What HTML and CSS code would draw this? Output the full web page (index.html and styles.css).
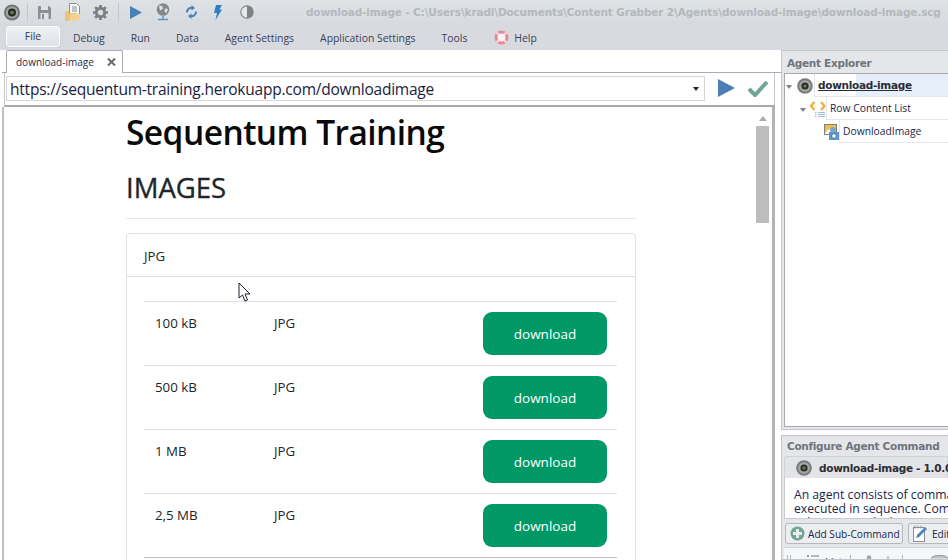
FILE: index.html
```html
<!DOCTYPE html>
<html lang="en">
<head>
<meta charset="utf-8">
<title>download-image</title>
<link rel="stylesheet" href="styles.css">
</head>
<body>
<div class="app">
  <header class="titlebar">
    <svg class="logo" width="24" height="24" viewBox="0 0 24 24"><circle cx="12" cy="12.500" r="8" fill="#737575"/><circle cx="12" cy="12.500" r="6" fill="#a5a7a7"/><circle cx="12" cy="12.500" r="4" fill="#2a2c2a"/><circle cx="12" cy="12.500" r="1.800" fill="#5c8a3a"/></svg>
    <span class="qsep s1"></span>
    <svg class="q-save" width="13" height="13" viewBox="0 0 13 13"><path d="M0 0h11l2 2v11H0z" fill="#8b9095"/><rect x="3" y="0" width="7" height="4" fill="#dfe2e5"/><rect x="2.500" y="7" width="8" height="6" fill="#dfe2e5"/><rect x="4" y="8" width="2" height="5" fill="#8b9095"/></svg>
    <svg class="q-open" width="16" height="19" viewBox="0 0 16 19"><path d="M4.500 .5h7l3 3v8h-10z" fill="#f6f7f8" stroke="#8b9095"/><path d="M7 4h5M7 6h5M7 8h5" stroke="#8b9095"/><path d="M0 8h4v2h8l-2 8H0z" fill="#efc27c"/><path d="M4 18l2-7h10l-3 7z" fill="#f5d193"/></svg>
    <svg class="q-gear" width="15" height="15" viewBox="0 0 16 16"><circle cx="8" cy="8" r="4.500" fill="none" stroke="#7c7f80" stroke-width="3"/><path d="M8 0v3M8 13v3M0 8h3M13 8h3M2.300 2.300l2 2M11.700 11.700l2 2M13.700 2.300l-2 2M4.300 11.700l-2 2" stroke="#7c7f80" stroke-width="2.800"/></svg>
    <span class="qsep s2"></span>
    <svg class="q-play" width="12" height="13" viewBox="0 0 12 13"><path d="M0 0l12 6.500L0 13z" fill="#4a7fb8"/></svg>
    <svg class="q-globe" width="14" height="18" viewBox="0 0 14 18"><circle cx="7" cy="6.500" r="6.300" fill="#85898c"/><path d="M3 2.500l3 .5 1 2.500-3 2zM9 5.500l3 .5-1.500 4-2-1.500z" fill="#dfe2e5"/><path d="M2 16.500h10M7 13v3.500" stroke="#5f93c6" stroke-width="1.500"/></svg>
    <svg class="q-sync" width="11" height="14" viewBox="0 0 11 14"><path d="M1 7.500a4.500 4.500 0 0 1 6-4.500M10 6.500a4.500 4.500 0 0 1-6 4.500" fill="none" stroke="#3f84bf" stroke-width="2"/><path d="M5.500 0l3.500 3-3.500 2.500zM5.500 14L2 11l3.500-2.500z" fill="#3f84bf"/></svg>
    <svg class="q-bolt" width="8" height="15" viewBox="0 0 8 15"><path d="M2 0h6L5.500 4.500H8L1.500 15l1.500-7H0z" fill="#2e7fc4"/></svg>
    <svg class="q-half" width="14" height="14" viewBox="0 0 14 14"><circle cx="7" cy="7" r="6.200" fill="#e6e8ea" stroke="#85898c" stroke-width="1.200"/><path d="M7 .8a6.200 6.200 0 0 1 0 12.400z" fill="#7f8386"/></svg>
    <div class="doc-title">download-image - C:\Users\kradi\Documents\Content Grabber 2\Agents\download-image\download-image.scg</div>
  </header>
  <nav class="menubar">
    <span class="menu-file">File</span>
    <span class="menu-item">Debug</span>
    <span class="menu-item">Run</span>
    <span class="menu-item">Data</span>
    <span class="menu-item">Agent Settings</span>
    <span class="menu-item">Application Settings</span>
    <span class="menu-item">Tools</span>
    <svg class="help-icon" width="15" height="15" viewBox="0 0 15 15"><circle cx="7.500" cy="7.500" r="5.500" fill="#f2f3f5" stroke="#e58a97" stroke-width="3"/><path d="M2.500 2.500l2.500 2.500M12.500 2.500L10 5M2.500 12.500L5 10M12.500 12.500L10 10" stroke="#f7dde1" stroke-width="1.800"/></svg>
    <span class="menu-item">Help</span>
  </nav>
  <div class="workspace">
    <main class="browser-pane">
      <div class="tabstrip">
        <div class="tab"><span>download-image</span>
          <svg class="tab-close" width="9" height="8" viewBox="0 0 9 8"><path d="M1 .5l7 7M8 .5l-7 7" stroke="#666a70" stroke-width="2"/></svg>
        </div>
      </div>
      <div class="urlrow">
        <div class="urlbox">
          <span class="urltext">https://sequentum-training.herokuapp.com/downloadimage</span>
          <span class="caret"></span>
        </div>
        <svg class="go" width="18" height="18" viewBox="0 0 18 18"><path d="M0 0l17 9-17 9z" fill="#4a7fb8"/></svg>
        <svg class="ok" width="22" height="17" viewBox="0 0 22 17"><path d="M2 9l6 6L20 2" fill="none" stroke="#6fa593" stroke-width="4"/></svg>
      </div>
      <div class="webview">
        <div class="page">
          <h1>Sequentum Training</h1>
          <h2>IMAGES</h2>
          <div class="card">
            <div class="card-head">JPG</div>
            <div class="card-body">
              <div class="row"><span class="c1">100 kB</span><span class="c2">JPG</span><span class="btn">download</span></div>
              <div class="row"><span class="c1">500 kB</span><span class="c2">JPG</span><span class="btn">download</span></div>
              <div class="row"><span class="c1">1 MB</span><span class="c2">JPG</span><span class="btn">download</span></div>
              <div class="row"><span class="c1">2,5 MB</span><span class="c2">JPG</span><span class="btn">download</span></div>
              <div class="row last"></div>
            </div>
          </div>
        </div>
        <div class="scrollbar"><span class="arrow"></span><span class="thumb"></span></div>
        <svg class="cursor" width="14" height="21" viewBox="0 0 14 21"><path d="M1 1v15l3.500-3 2.500 6 2.500-1-2.500-6h5z" fill="#fff" stroke="#1a2030"/></svg>
      </div>
    </main>
    <aside class="side">
      <section class="explorer">
        <div class="panel-title">Agent Explorer</div>
        <div class="tree">
          <div class="node n0">
            <span class="twist"></span>
            <svg class="node-ico" width="16" height="16" viewBox="0 0 16 16"><circle cx="8" cy="8" r="7.800" fill="#7a7c7c"/><circle cx="8" cy="8" r="5.800" fill="#a5a7a7"/><circle cx="8" cy="8" r="3.600" fill="#2c2e2c"/><circle cx="8" cy="8" r="1.600" fill="#5c8a3a"/></svg>
            <span class="label strong">download-image</span>
          </div>
          <div class="node n1">
            <span class="twist"></span>
            <svg class="node-ico" width="16" height="16" viewBox="0 0 16 16"><path d="M4.500 1L1 5l3.500 4M11 1l3.500 4L11 9" fill="none" stroke="#eeb040" stroke-width="2.400"/><path d="M5 11.500h1.500M8 11.500h7M5 13.500h1.500M8 13.500h7M5 15.500h1.500M8 15.500h7" stroke="#9dbbd8"/></svg>
            <span class="label">Row Content List</span>
          </div>
          <div class="node n2">
            <svg class="node-ico" width="15" height="16" viewBox="0 0 15 16"><rect x=".5" y=".5" width="12" height="10" fill="#f0c04a" stroke="#7b8085"/><path d="M1 9l4-4 3 3v2H1z" fill="#fff"/><circle cx="9" cy="6" r="3" fill="#7da6cc"/><rect x="5" y="8" width="10" height="8" fill="#5f97c9"/><circle cx="10" cy="12" r="2.500" fill="#e1ebf4" stroke="#3f78ad"/></svg>
            <span class="label">DownloadImage</span>
          </div>
        </div>
      </section>
      <section class="config">
        <div class="panel-title">Configure Agent Command</div>
        <div class="cmd-head">
          <svg class="node-ico" width="16" height="16" viewBox="0 0 16 16"><circle cx="8" cy="8" r="7.800" fill="#7a7c7c"/><circle cx="8" cy="8" r="5.800" fill="#a5a7a7"/><circle cx="8" cy="8" r="3.600" fill="#2c2e2c"/><circle cx="8" cy="8" r="1.600" fill="#5c8a3a"/></svg>
          <span>download-image - 1.0.0</span>
        </div>
        <div class="cmd-desc">An agent consists of commands that are<br>executed in sequence. Commands can have<br>sub-commands that are executed in order</div>
        <div class="cmd-btns">
          <span class="cmd-btn"><svg class="node-ico" width="15" height="15" viewBox="0 0 15 15"><circle cx="7.500" cy="7.500" r="7" fill="#6fa593"/><path d="M7.500 3v9M3 7.500h9" stroke="#e6f0ec" stroke-width="3"/></svg><span>Add Sub-Command</span></span>
          <span class="cmd-btn"><svg class="node-ico" width="16" height="17" viewBox="0 0 16 17"><rect x=".5" y="2.500" width="11" height="14" fill="#fff" stroke="#8b9095"/><path d="M2 .5v3M5 .5v3M8 .5v3" stroke="#8b9095"/><path d="M3 13l1-3 8-8 2 2-8 8z" fill="#4a86c0"/></svg><span>Edit</span></span>
        </div>
        <div class="cmd-tabs">
          <span class="grip"></span>
          <svg class="list-ico" width="12" height="10" viewBox="0 0 12 10"><path d="M0 1h2M0 5h2M0 9h2" stroke="#3f84bf" stroke-width="1.500"/><path d="M4 1h8M4 5h8M4 9h8" stroke="#777b80"/></svg>
          <span class="tab-list">List</span>
          <span class="tab-sep"></span>
          <svg class="person" width="8" height="10" viewBox="0 0 8 10"><circle cx="4" cy="2.500" r="2.300" fill="#a3a6aa"/><path d="M0 10l1-4h6l1 4z" fill="#a3a6aa"/></svg>
          <svg class="person2" width="8" height="10" viewBox="0 0 8 10"><path d="M4 0l4 10H0z" fill="#b7c6d6"/></svg>
          <span class="tab-sep s3"></span>
          <svg class="db" width="17" height="12" viewBox="0 0 17 12"><ellipse cx="8.500" cy="3" rx="8" ry="2.500" fill="#c2c4c7" stroke="#8d9094"/><path d="M.5 3v9h16V3" fill="#d8dadc"/></svg>
        </div>
      </section>
    </aside>
  </div>
</div>
</body>
</html>
```
FILE: styles.css
```css
* { box-sizing: border-box; }
html, body { margin: 0; padding: 0; }
body { width: 948px; height: 560px; overflow: hidden; font-family: "Open Sans", "Noto Sans", sans-serif; color: #2b3040; background: #d9dbe0; }
.app { width: 948px; height: 560px; display: flex; flex-direction: column; }
svg { flex: none; display: block; }

.titlebar { height: 24px; display: flex; align-items: center; background: linear-gradient(#dfe2e5, #d7dade); flex: none; }
.qsep { width: 1px; height: 18px; background: #c3c6ca; flex: none; }
.s1 { margin: 0 10px 0 3px; }
.q-open { margin-left: 14px; }
.q-gear { margin-left: 12px; }
.s2 { margin: 0 11px 0 10px; }
.q-globe { margin-left: 14px; }
.q-sync { margin-left: 16px; }
.q-bolt { margin-left: 17px; }
.q-half { margin-left: 18px; }
.doc-title { font: bold 10.500px "DejaVu Sans", sans-serif; letter-spacing: -0.150px; color: #b4b8bd; white-space: nowrap; margin-left: 52px; }

.menubar { height: 26px; display: flex; align-items: center; background: #d8dadf; flex: none; font: 10.400px/14px "Open Sans", sans-serif; padding: 1px 0 0 6px; }
.menu-file { width: 54px; height: 21px; margin-top: -2px; line-height: 19px; text-align: center; background: linear-gradient(#eef0f3, #dfe2e7); border: 1px solid #fff; border-radius: 3px; box-shadow: 0 0 1px #a8acb3; margin-right: 13px; color: #333a4c; }
.menu-item { color: #3b4255; white-space: nowrap; margin-right: 26px; }
.help-icon { margin: 0 5px 0 1px; }

.workspace { flex: 1; display: flex; min-height: 0; }
.browser-pane { width: 781px; display: flex; flex-direction: column; background: #fff; padding-left: 2px; flex: none; }
.tabstrip { height: 23px; flex: none; border-bottom: 1px solid #a9acb3; background: #fff; }
.tab { width: 117px; height: 23px; margin-left: 4px; padding: 0 6px 0 9px; display: flex; align-items: center; justify-content: space-between; background: #fff; border: 1px solid #a9acb3; border-bottom: 0; border-radius: 2px 2px 0 0; font-size: 10px; color: #1f2a50; }

.urlrow { height: 34px; flex: none; display: flex; align-items: flex-start; margin: 0 6px 0 2px; padding: 3px 0 0 1px; border-left: 1px solid #c6c8cc; border-right: 1px solid #c6c8cc; border-bottom: 2px solid #a9a9ab; }
.urlbox { width: 699px; height: 25px; flex: none; display: flex; align-items: center; justify-content: space-between; border: 1px solid #d5d5d5; padding: 0 5px 0 3px; font: 15.500px "Open Sans", sans-serif; color: #1a2240; }
.urltext { letter-spacing: -0.220px; }
.caret { width: 0; height: 0; border: 3.500px solid transparent; border-top: 4px solid #222; border-bottom: 0; }
.go { margin: 3px 0 0 13px; }
.ok { margin: 4px 0 0 11px; }

.webview { position: relative; flex: 1; min-height: 0; overflow: hidden; background: #fff; border-left: 2px solid #bfc0c5; border-right: 3px solid #b4b4b6; margin-right: 6px; }
.page { width: 510px; margin-left: 122px; color: #212529; font-family: "Open Sans", sans-serif; }
h1 { margin: 0; height: 51px; font-size: 33.500px; line-height: 51px; font-weight: 600; color: #0a0a0a; letter-spacing: -0.550px; }
h2 { margin: 0; height: 61px; padding-top: 12px; font-size: 27.500px; line-height: 36px; font-weight: 400; -webkit-text-stroke: 0.350px #212529; color: #212529; border-bottom: 1px solid #e4e6e8; }
.card { margin-top: 14px; border: 1px solid #dcdfe1; border-radius: 4px; height: 400px; }
.card-head { height: 43px; padding: 13px 0 0 17px; border-bottom: 1px solid #dcdfe1; font-size: 13.300px; line-height: 18px; }
.card-body { padding: 24px 18px 0 17px; }
.row { height: 64px; border-top: 1px solid #dee2e6; display: flex; padding: 10px 10px 0 11px; font-size: 13.300px; line-height: 22px; }
.row.last { border-top-color: #bdbfc1; }
.c1 { width: 119px; }
.c2 { flex: 1; }
.btn { width: 124px; height: 43px; background: #009966; color: #fff; border-radius: 9px; text-align: center; line-height: 44px; font-size: 13.500px; }
.scrollbar { position: absolute; top: 0; right: 3px; width: 13px; height: 100%; }
.arrow { display: block; width: 0; height: 0; margin: 9px auto 0; border: 4px solid transparent; border-bottom: 5px solid #a9acb0; border-top: 0; }
.thumb { display: block; width: 13px; height: 97px; margin-top: 5px; background: #bdbdbd; }
.cursor { position: absolute; left: 234px; top: 175px; }

.side { flex: 1; min-width: 0; display: flex; flex-direction: column; background: #fff; overflow: hidden; gap: 5px; }
.explorer { height: 380px; flex: none; border: 1px solid #c3c5ca; border-right: 0; background: #e4e6e9; padding: 0 0 2px 2px; display: flex; flex-direction: column; }
.panel-title { height: 22px; font: bold 10.500px/25px "DejaVu Sans", sans-serif; letter-spacing: -0.300px; color: #70757d; padding-left: 3px; flex: none; white-space: nowrap; }
.tree { flex: 1; background: #fff; border: 1px solid #a7a9ad; border-right: 0; font-size: 10.300px; color: #20264a; }
.node { display: flex; align-items: center; height: 23px; white-space: nowrap; }
.twist { width: 0; height: 0; border: 3px solid transparent; border-top: 4px solid #7f8287; border-bottom: 0; margin: 2px 4px 0 0; flex: none; }
.label { flex: 1; align-self: stretch; border-left: 1px solid #e5e7ea; border-bottom: 1px solid #e5e7ea; padding-left: 3px; line-height: 22px; }
.n0 { padding-left: 1px; }
.n0 .twist { margin-right: 5px; }
.n0 .label { margin-left: 1px; font: bold 10.500px/22px "DejaVu Sans", sans-serif; letter-spacing: -0.300px; color: #2a2d36; text-decoration: underline; background: linear-gradient(90deg, #fff 41px, #e6eef9 41px); }
.n1 { padding-left: 15px; }
.n2 { padding-left: 39px; }

.config { flex: 1; min-height: 0; border: 1px solid #c3c5ca; border-right: 0; background: #e4e6e9; padding: 0 0 0 2px; overflow: hidden; display: flex; flex-direction: column; }
.config .panel-title { height: 20px; line-height: 21px; }
.cmd-head { height: 22px; flex: none; display: flex; align-items: center; gap: 7px; padding-left: 11px; background: #e2e4e7; border-radius: 3px 0 0 0; border: 1px solid #d0d2d6; border-bottom: 0; white-space: nowrap; font: bold 10.500px "DejaVu Sans", sans-serif; letter-spacing: -0.300px; color: #2a2d36; }
.cmd-desc { height: 41px; flex: none; overflow: hidden; background: #fff; border: 1px solid #c9cbcf; border-top: 0; padding: 10px 0 0 9px; width: 300px; font-size: 12.200px; line-height: 14px; color: #20264a; white-space: nowrap; }
.cmd-btns { height: 28px; flex: none; display: flex; gap: 5px; padding: 4px 0 0 1px; white-space: nowrap; width: 300px; }
.cmd-btn { height: 21px; padding: 0 3px 0 4px; display: flex; align-items: center; gap: 3px; border: 1px solid #b5b8bd; border-radius: 3px; background: #eceef0; font-size: 10.100px; color: #20264a; }
.cmd-btn:first-child { width: 118px; }
.cmd-tabs { flex: 1; min-height: 0; display: flex; align-items: flex-start; background: #f6f7f8; border-top: 1px solid #d6d8dc; padding: 7px 0 0 3px; font-size: 11px; line-height: 14px; color: #20264a; white-space: nowrap; overflow: hidden; }
.grip { width: 4px; height: 8px; border-left: 1px solid #b5b8bd; border-right: 1px solid #b5b8bd; flex: none; }
.list-ico { margin-left: 16px; }
.tab-list { margin-left: 6px; width: 20px; }
.tab-sep { width: 1px; height: 10px; background: #b5b8bd; margin-left: 6px; flex: none; }
.person { margin-left: 14px; }
.person2 { margin-left: 11px; }
.s3 { margin-left: 10px; }
.db { margin-left: 28px; }
```
